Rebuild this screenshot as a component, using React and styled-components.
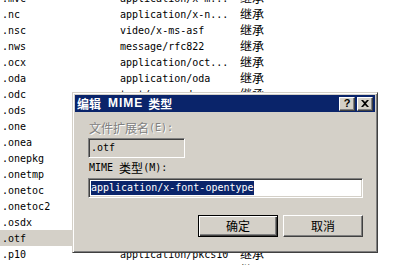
import React from "react";
import styled, { createGlobalStyle } from "styled-components";

const rows = [
  { ext: ".mvc", type: "application/x-m...", how: "继承" },
  { ext: ".nc", type: "application/x-n...", how: "继承" },
  { ext: ".nsc", type: "video/x-ms-asf", how: "继承" },
  { ext: ".nws", type: "message/rfc822", how: "继承" },
  { ext: ".ocx", type: "application/oct...", how: "继承" },
  { ext: ".oda", type: "application/oda", how: "继承" },
  { ext: ".odc", type: "text/x-ms-odc", how: "继承" },
  { ext: ".ods", type: "application/ole...", how: "继承" },
  { ext: ".one", type: "application/one...", how: "继承" },
  { ext: ".onea", type: "application/one...", how: "继承" },
  { ext: ".onepkg", type: "application/one...", how: "继承" },
  { ext: ".onetmp", type: "application/one...", how: "继承" },
  { ext: ".onetoc", type: "application/one...", how: "继承" },
  { ext: ".onetoc2", type: "application/one...", how: "继承" },
  { ext: ".osdx", type: "application/ope...", how: "继承" },
  { ext: ".otf", type: "application/x-f...", how: "继承", selected: true },
  { ext: ".p10", type: "application/pkcs10", how: "继承" },
  { ext: ".p12", type: "application/x-p...", how: "继承" },
];

const App = () => {
  return (
    <>
      <GlobalStyle />
      <List>
        {rows.map((r) => (
          <Row key={r.ext}>
            <NameCell $selected={r.selected}>{r.ext}</NameCell>
            <Cell>{r.type}</Cell>
            <Cell>
              <Cjk>{r.how}</Cjk>
            </Cell>
          </Row>
        ))}
      </List>

      <Window>
        <TitleBar>
          <Title>
            <TitleCjk>编辑</TitleCjk>
            <TitleLatin>MIME</TitleLatin>
            <TitleCjk>类型</TitleCjk>
          </Title>
          <CaptionButtons>
            <CaptionButton>?</CaptionButton>
            <CaptionButton>
              <svg width="8" height="7" viewBox="0 0 8 7">
                <path
                  d="M0 0h2l2 2 2-2h2L5 3.5 8 7H6L4 5 2 7H0l3-3.5z"
                  fill="#000"
                />
              </svg>
            </CaptionButton>
          </CaptionButtons>
        </TitleBar>
        <Body>
          <Label $disabled>
            <Cjk>文件扩展名</Cjk>(E):
          </Label>
          <TextBox $disabled $width={97}>
            .otf
          </TextBox>
          <Label>
            MIME <Cjk>类型</Cjk>(M):
          </Label>
          <TextBox $width={275}>
            <Selection>application/x-font-opentype</Selection>
          </TextBox>
          <ButtonRow>
            <Button $default>
              <Cjk>确定</Cjk>
            </Button>
            <Button>
              <Cjk>取消</Cjk>
            </Button>
          </ButtonRow>
        </Body>
      </Window>
    </>
  );
};

const GlobalStyle = createGlobalStyle`
  html, body {
    margin: 0;
    padding: 0;
    background: #ffffff;
  }
  body {
    width: 393px;
    height: 265px;
    overflow: hidden;
    position: relative;
    font-family: "DejaVu Sans Mono", "Liberation Mono", "Noto Sans CJK SC", monospace;
    font-size: 10px;
    color: #000;
  }
`;

const Cjk = styled.span`
  font-family: "Noto Sans CJK SC", sans-serif;
  font-size: 12px;
  vertical-align: top;
`;

const List = styled.div`
  margin-top: -10px;
  display: flex;
  flex-direction: column;
`;

const Row = styled.div`
  display: grid;
  grid-template-columns: 118px 120px 1fr;
  height: 16px;
  line-height: 16px;
`;

const NameCell = styled.div`
  padding: 1px 0 0 2px;
  height: 16px;
  box-sizing: border-box;
  background: ${(p) => (p.$selected ? "#d4d0c8" : "transparent")};
  white-space: nowrap;
`;

const Cell = styled.div`
  padding: 1px 0 0 2px;
  white-space: nowrap;

  span {
    margin-top: -1px;
    display: inline-block;
  }
`;

const Window = styled.div`
  position: absolute;
  left: 72px;
  top: 92px;
  width: 306px;
  height: 161px;
  box-sizing: border-box;
  background: #d4d0c8;
  border: 1px solid;
  border-color: #d4d0c8 #404040 #404040 #d4d0c8;
  box-shadow: inset 1px 1px #ffffff, inset -1px -1px #808080;
  padding: 2px;
  display: flex;
  flex-direction: column;
`;

const TitleBar = styled.div`
  height: 17px;
  background: #0a246a;
  display: flex;
  align-items: center;
  justify-content: space-between;
  padding: 0 2px;
`;

const Title = styled.div`
  display: flex;
  align-items: center;
  gap: 5px;
  color: #fff;
  font-weight: bold;
  line-height: 17px;
  white-space: nowrap;
`;

const TitleCjk = styled.span`
  font-family: "Noto Sans CJK SC", sans-serif;
  font-size: 12px;
  font-weight: bold;
`;

const TitleLatin = styled.span`
  font-family: "Liberation Sans", sans-serif;
  font-size: 12px;
  font-weight: bold;
  letter-spacing: 1px;
  margin-left: 2px;
`;

const CaptionButtons = styled.div`
  display: flex;
  gap: 2px;
`;

const CaptionButton = styled.div`
  width: 16px;
  height: 14px;
  box-sizing: border-box;
  background: #d4d0c8;
  border: 1px solid;
  border-color: #ffffff #404040 #404040 #ffffff;
  box-shadow: inset -1px -1px #808080;
  display: flex;
  align-items: center;
  justify-content: center;
  font-family: "Liberation Sans", sans-serif;
  font-weight: bold;
  font-size: 11px;
  line-height: 12px;
  padding-bottom: 1px;
`;

const Body = styled.div`
  flex: 1;
  display: flex;
  flex-direction: column;
  align-items: flex-start;
  padding: 8px 12px 0 13px;
`;

const Label = styled.div`
  height: 16px;
  line-height: 16px;
  padding-left: 1px;
  white-space: pre;
  color: ${(p) => (p.$disabled ? "#808080" : "#000")};
  text-shadow: ${(p) => (p.$disabled ? "1px 1px #ffffff" : "none")};
  margin-bottom: 2px;
`;

const TextBox = styled.div`
  width: ${(p) => p.$width}px;
  height: 20px;
  box-sizing: border-box;
  background: ${(p) => (p.$disabled ? "#d4d0c8" : "#ffffff")};
  border: 1px solid;
  border-color: #808080 #ffffff #ffffff #808080;
  box-shadow: inset 1px 1px #404040, inset -1px -1px #d4d0c8;
  padding: 2px 2px 0 2px;
  line-height: 14px;
  white-space: nowrap;
  margin-bottom: 2px;
`;

const Selection = styled.span`
  display: inline-block;
  background: #0a246a;
  color: #ffffff;
  line-height: 14px;
`;

const ButtonRow = styled.div`
  align-self: stretch;
  display: flex;
  justify-content: flex-end;
  gap: 5px;
  margin-top: 15px;
`;

const Button = styled.div`
  width: 80px;
  height: 22px;
  box-sizing: border-box;
  background: #d4d0c8;
  display: flex;
  align-items: center;
  justify-content: center;
  border: 1px solid;
  border-color: ${(p) =>
    p.$default ? "#000000" : "#ffffff #404040 #404040 #ffffff"};
  box-shadow: ${(p) =>
    p.$default
      ? "inset 1px 1px #ffffff, inset -1px -1px #404040, inset -2px -2px #808080"
      : "inset -1px -1px #808080"};
  line-height: 16px;
`;

export default App;
